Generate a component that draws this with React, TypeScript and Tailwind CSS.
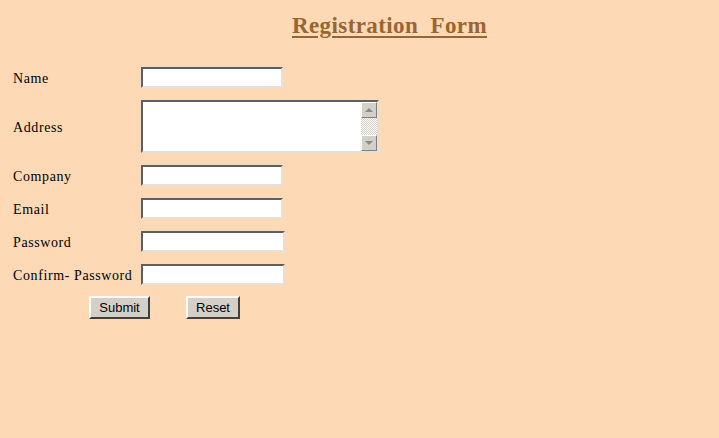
import React from 'react';

const inputCls =
  'h-[21px] bg-white border-2 border-t-[#5f5f5f] border-l-[#5f5f5f] border-b-[#e4e1dc] border-r-[#e4e1dc] outline-none';

const fields = [
  { label: 'Name', width: 'w-[142px]' },
  { label: 'Address', width: '' },
  { label: 'Company', width: 'w-[142px]' },
  { label: 'Email', width: 'w-[142px]' },
  { label: 'Password', width: 'w-[144px]' },
  { label: 'Confirm- Password', width: 'w-[144px]' },
];

function AddressBox() {
  return (
    <div className="flex w-[238px] h-[53px] bg-white border-2 border-t-[#5f5f5f] border-l-[#5f5f5f] border-b-[#e4e1dc] border-r-[#e4e1dc]">
      <div className="flex-1" />
      {/* scrollbar */}
      <div className="w-[16px] flex flex-col">
        <div className="h-[16px] bg-[#d4d0c8] border border-t-white border-l-white border-b-[#808080] border-r-[#808080] flex items-center justify-center">
          <svg width="8" height="5" viewBox="0 0 8 5">
            <path d="M0 4 L4 0 L8 4 Z" fill="#8a8a8a" />
          </svg>
        </div>
        <div className="flex-1 bg-[repeating-conic-gradient(#d4d0c8_0%_25%,#ffffff_0%_50%)] bg-[length:2px_2px]" />
        <div className="h-[16px] bg-[#d4d0c8] border border-t-white border-l-white border-b-[#808080] border-r-[#808080] flex items-center justify-center">
          <svg width="8" height="5" viewBox="0 0 8 5">
            <path d="M0 0 L8 0 L4 4 Z" fill="#8a8a8a" />
          </svg>
        </div>
      </div>
    </div>
  );
}

function Btn({ children, w }: { children: React.ReactNode; w: string }) {
  return (
    <button
      className={`${w} h-[23px] bg-[#d4d0c8] border-2 border-t-white border-l-white border-b-[#404040] border-r-[#404040] text-[13px] text-black font-['Liberation_Sans',Arial,sans-serif] leading-none`}
    >
      {children}
    </button>
  );
}

export default function App() {
  return (
    <div className="w-[719px] h-[438px] bg-[#fed9b5] font-['Liberation_Serif','Times_New_Roman',serif] text-black text-[14px]">
      <div className="pt-[12px] pl-[292px]">
        <h1 className="text-[23px] font-bold tracking-[0.4px] text-[#996633] underline underline-offset-[3px] leading-[28px] whitespace-pre">
          Registration  Form
        </h1>
      </div>

      <div className="pl-[13px] pt-[27px] flex flex-col gap-[12px]">
        {fields.map((f) => (
          <div key={f.label} className="flex items-center">
            <span className="w-[128px] whitespace-nowrap tracking-[0.6px] leading-[17px] pt-[2px]">{f.label}</span>
            {f.label === 'Address' ? (
              <AddressBox />
            ) : (
              <input
                type={f.label.includes('Password') ? 'password' : 'text'}
                className={`${inputCls} ${f.width}`}
              />
            )}
          </div>
        ))}
      </div>

      <div className="flex pl-[89px] pt-[11px] gap-[36px]">
        <Btn w="w-[61px]">Submit</Btn>
        <Btn w="w-[54px]">Reset</Btn>
      </div>
    </div>
  );
}
